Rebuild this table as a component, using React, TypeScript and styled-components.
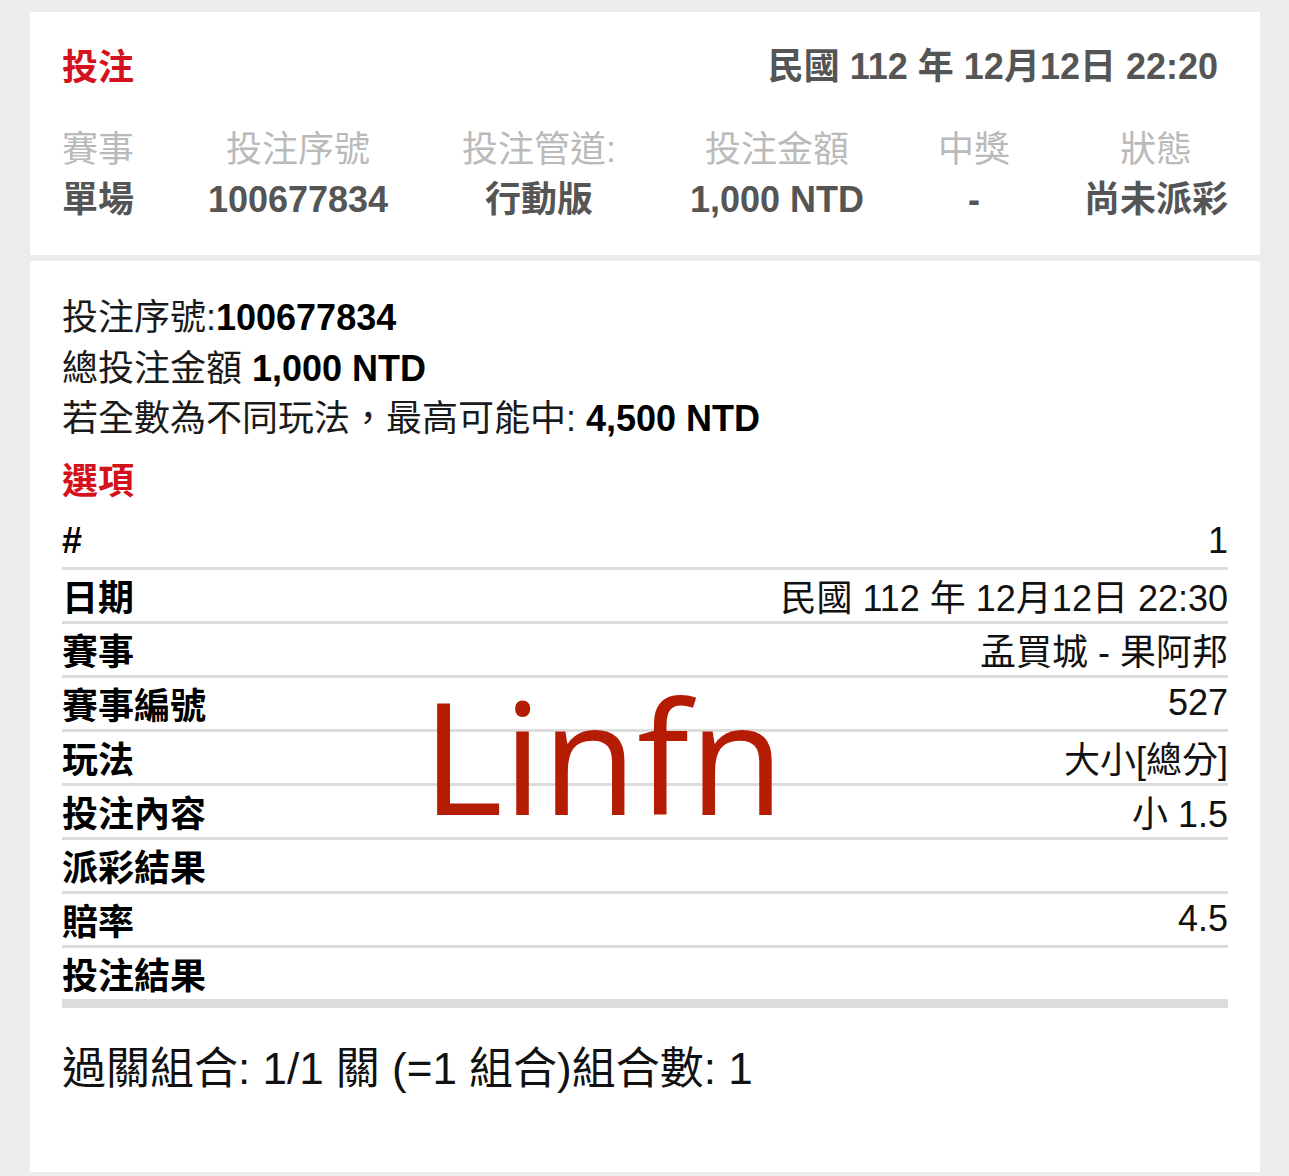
import React from "react";
import styled, { createGlobalStyle } from "styled-components";

const GlobalStyle = createGlobalStyle`
  html, body {
    margin: 0;
    padding: 0;
    background: #ececec;
  }
  body {
    font-family: "Liberation Sans", "Noto Sans CJK TC", sans-serif;
    color: #111;
  }
`;

const Page = styled.div`
  width: 1230px;
  padding: 12px 29px 5px 30px;
  display: flex;
  flex-direction: column;
  gap: 6px;
`;

const Card = styled.section<{ $padBottom: number }>`
  position: relative;
  background: #fff;
  padding: 0 32px ${(p) => p.$padBottom}px 32px;
`;

const HeaderRow = styled.div`
  display: flex;
  justify-content: space-between;
  align-items: center;
  padding-top: 34px;
  height: 44px;
  box-sizing: content-box;
`;

const RedTitle = styled.h2`
  margin: 0;
  font-size: 36px;
  line-height: 50px;
  font-weight: 700;
  color: #d3121c;
`;

const HeaderDate = styled.div`
  font-size: 36px;
  line-height: 44px;
  font-weight: 700;
  color: #555;
  margin-right: 10px;
  margin-top: -2px;
`;

const Summary = styled.div`
  display: flex;
  justify-content: space-between;
  margin-top: 35px;
`;

const SummaryCol = styled.div`
  display: flex;
  flex-direction: column;
  align-items: center;
`;

const SummaryLabel = styled.div`
  font-size: 36px;
  line-height: 50px;
  color: #bababa;
`;

const SummaryValue = styled.div`
  font-size: 36px;
  line-height: 50px;
  font-weight: 700;
  color: #555;
`;

const InfoBlock = styled.div`
  padding-top: 32px;
  display: flex;
  flex-direction: column;
`;

const InfoLine = styled.div`
  font-size: 36px;
  line-height: 50.5px;
  color: #1a1a1a;
  white-space: nowrap;
`;

const Strong = styled.b`
  font-weight: 700;
  color: #000;
`;

const SectionTitle = styled(RedTitle)`
  margin-top: 12px;
`;

const Table = styled.div`
  margin-top: 9px;
  display: flex;
  flex-direction: column;
  border-bottom: 6px solid #dcdcdc;
`;

const Row = styled.div`
  display: flex;
  justify-content: space-between;
  align-items: center;
  height: 51px;
  border-bottom: 3px solid #dcdcdc;
`;

const RowLabel = styled.div`
  font-size: 36px;
  font-weight: 700;
  color: #000;
`;

const RowValue = styled.div`
  font-size: 36px;
  color: #111;
`;

const Footer = styled.div`
  margin-top: 34px;
  font-size: 44px;
  line-height: 54px;
  color: #111;
  white-space: nowrap;
`;

const Watermark = styled.div`
  position: absolute;
  left: 392px;
  top: 416px;
  font-family: "Open Sans", "Noto Sans", sans-serif;
  font-size: 155px;
  line-height: 1;
  color: #b41c04;
  pointer-events: none;
`;

const summary = [
  { label: "賽事", value: "單場" },
  { label: "投注序號", value: "100677834" },
  { label: "投注管道:", value: "行動版" },
  { label: "投注金額", value: "1,000 NTD" },
  { label: "中獎", value: "-" },
  { label: "狀態", value: "尚未派彩" },
];

const rows = [
  { label: "#", value: "1" },
  { label: "日期", value: "民國 112 年 12月12日 22:30" },
  { label: "賽事", value: "孟買城 - 果阿邦" },
  { label: "賽事編號", value: "527" },
  { label: "玩法", value: "大小[總分]" },
  { label: "投注內容", value: "小 1.5" },
  { label: "派彩結果", value: "" },
  { label: "賠率", value: "4.5" },
  { label: "投注結果", value: "" },
];

export default function App() {
  return (
    <>
      <GlobalStyle />
      <Page>
        <Card $padBottom={30}>
          <HeaderRow>
            <RedTitle>投注</RedTitle>
            <HeaderDate>民國 112 年 12月12日 22:20</HeaderDate>
          </HeaderRow>
          <Summary>
            {summary.map((s) => (
              <SummaryCol key={s.label}>
                <SummaryLabel>{s.label}</SummaryLabel>
                <SummaryValue>{s.value}</SummaryValue>
              </SummaryCol>
            ))}
          </Summary>
        </Card>
        <Card $padBottom={76}>
          <InfoBlock>
            <InfoLine>
              投注序號:<Strong>100677834</Strong>
            </InfoLine>
            <InfoLine>
              總投注金額 <Strong>1,000 NTD</Strong>
            </InfoLine>
            <InfoLine>
              若全數為不同玩法，最高可能中: <Strong>4,500 NTD</Strong>
            </InfoLine>
          </InfoBlock>
          <SectionTitle>選項</SectionTitle>
          <Table>
            {rows.map((r) => (
              <Row key={r.label}>
                <RowLabel>{r.label}</RowLabel>
                <RowValue>{r.value}</RowValue>
              </Row>
            ))}
          </Table>
          <Footer>過關組合: 1/1 關 (=1 組合)組合數: 1</Footer>
          <Watermark>Linfn</Watermark>
        </Card>
      </Page>
    </>
  );
}
